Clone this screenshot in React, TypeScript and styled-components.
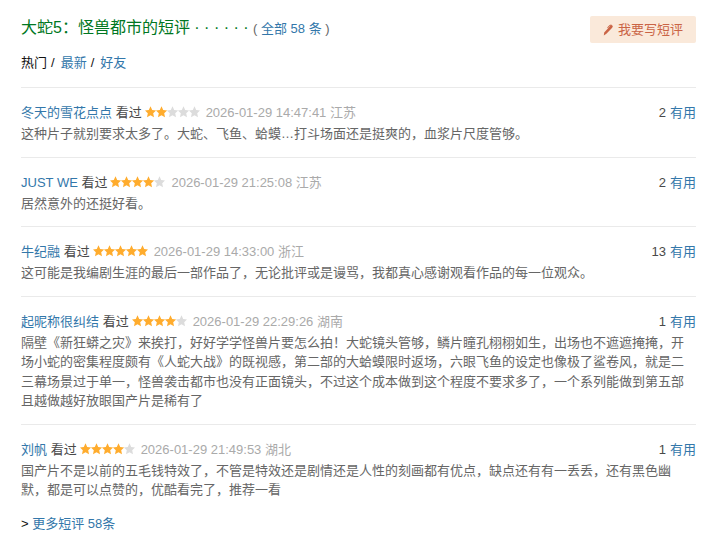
import React from "react";
import styled, { createGlobalStyle } from "styled-components";

const GlobalStyle = createGlobalStyle`
  body {
    margin: 0;
    background: #fff;
    color: #111;
    font: 13px/1.5 "Liberation Sans", Arial, "Noto Sans CJK SC", sans-serif;
  }
`;

const Section = styled.section`
  padding: 15px 30px 0 21px;
`;

const TopBar = styled.header`
  display: flex;
  justify-content: space-between;
  align-items: flex-start;
`;

const Title = styled.h2`
  margin: 0;
  font-size: 16px;
  font-weight: normal;
  line-height: 26px;
  color: #007722;
  white-space: pre;
`;

const Total = styled.span`
  font-size: 13px;
  color: #666;
`;

const Link = styled.a`
  color: #3377aa;
  text-decoration: none;

  &:hover {
    background: #3377aa;
    color: #fff;
  }
`;

const WriteButton = styled.button`
  display: flex;
  align-items: center;
  gap: 4px;
  height: 27px;
  margin: 1px 0 0;
  padding: 0 13px 0 12px;
  border: 0;
  border-radius: 2px;
  background: #fae9da;
  color: #ca6445;
  font: inherit;
  cursor: pointer;
`;

const Tabs = styled.nav`
  display: flex;
  gap: 4px;
  margin: 10px 0 14px;
  line-height: 20px;
`;

const Divider = styled.span`
  margin-right: 2px;
`;

const List = styled.ul`
  margin: 0;
  padding: 0;
  list-style: none;
`;

const Item = styled.li`
  padding: 15px 0 13px;
  border-top: 1px solid #eaeaea;
`;

const ItemHead = styled.div`
  display: flex;
  align-items: center;
  gap: 3px;
  height: 20px;
  margin-bottom: 1px;
  color: #494949;
`;

const Stars = styled.svg`
  display: block;
  width: 55px;
  height: 12px;
  margin-bottom: 2px;
`;

const Meta = styled.span`
  margin-left: 3px;
  color: #aaa;
`;

const Votes = styled.span`
  display: flex;
  gap: 4px;
  margin-left: auto;
`;

const Body = styled.p`
  margin: 0;
  padding-right: 10px;
  color: #666;
`;

const More = styled.footer`
  padding: 1px 0 20px;
`;

const STAR =
  "M5.5 0.2 L7.2 4 L11.1 4.4 L8.2 7.2 L9 11.3 L5.5 9.2 L2 11.3 L2.8 7.2 L-0.1 4.4 L3.8 4 Z";

function Rating({ value }: { value: number }) {
  return (
    <Stars viewBox="0 0 55 12" role="img" aria-label={`${value} / 5`}>
      {[0, 1, 2, 3, 4].map((i) => (
        <path
          key={i}
          d={STAR}
          transform={`translate(${i * 11} 0)`}
          fill={i < value ? "#ffac2d" : "#dcdcdc"}
        />
      ))}
    </Stars>
  );
}

function Pen() {
  return (
    <svg width="12" height="12" viewBox="0 0 12 12" fill="#ca6445" aria-hidden="true">
      <path d="M9 0.8 L10.9 2 L10.2 3.8 L4.4 9.8 L1.8 11.4 L2.2 8.6 L6.8 3.6 Z" />
      <path d="M5.2 3.6 L7.6 1 L9.4 0.6 L9.2 1.4 L8 1.8 L5.8 4.2 Z" />
    </svg>
  );
}

interface Comment {
  name: string;
  stars: number;
  time: string;
  place: string;
  votes: number;
  text: string;
}

const comments: Comment[] = [
  {
    name: "冬天的雪花点点",
    stars: 2,
    time: "2026-01-29 14:47:41",
    place: "江苏",
    votes: 2,
    text: "这种片子就别要求太多了。大蛇、飞鱼、蛤蟆…打斗场面还是挺爽的，血浆片尺度管够。",
  },
  {
    name: "JUST WE",
    stars: 4,
    time: "2026-01-29 21:25:08",
    place: "江苏",
    votes: 2,
    text: "居然意外的还挺好看。",
  },
  {
    name: "牛纪融",
    stars: 5,
    time: "2026-01-29 14:33:00",
    place: "浙江",
    votes: 13,
    text: "这可能是我编剧生涯的最后一部作品了，无论批评或是谩骂，我都真心感谢观看作品的每一位观众。",
  },
  {
    name: "起昵称很纠结",
    stars: 4,
    time: "2026-01-29 22:29:26",
    place: "湖南",
    votes: 1,
    text: "隔壁《新狂蟒之灾》来挨打，好好学学怪兽片要怎么拍！大蛇镜头管够，鳞片瞳孔栩栩如生，出场也不遮遮掩掩，开场小蛇的密集程度颇有《人蛇大战》的既视感，第二部的大蛤蟆限时返场，六眼飞鱼的设定也像极了鲨卷风，就是二三幕场景过于单一，怪兽袭击都市也没有正面镜头，不过这个成本做到这个程度不要求多了，一个系列能做到第五部且越做越好放眼国产片是稀有了",
  },
  {
    name: "刘帆",
    stars: 4,
    time: "2026-01-29 21:49:53",
    place: "湖北",
    votes: 1,
    text: "国产片不是以前的五毛钱特效了，不管是特效还是剧情还是人性的刻画都有优点，缺点还有有一丢丢，还有黑色幽默，都是可以点赞的，优酷看完了，推荐一看",
  },
];

export default function App() {
  return (
    <>
      <GlobalStyle />
      <Section lang="zh-CN">
        <TopBar>
          <Title>
            大蛇5：怪兽都市的短评 · · · · · ·{" "}
            <Total>
              ( <Link href="#all">全部 58 条</Link> )
            </Total>
          </Title>
          <WriteButton type="button">
            <Pen />
            我要写短评
          </WriteButton>
        </TopBar>
        <Tabs>
          <span>热门</span>
          <Divider>/</Divider>
          <Link href="#latest">最新</Link>
          <Divider>/</Divider>
          <Link href="#friends">好友</Link>
        </Tabs>
        <List>
          {comments.map((c) => (
            <Item key={c.name}>
              <ItemHead>
                <span>
                  <Link href="#user">{c.name}</Link> 看过
                </span>
                <Rating value={c.stars} />
                <Meta>
                  <time>{c.time}</time> {c.place}
                </Meta>
                <Votes>
                  <span>{c.votes}</span>
                  <Link href="#useful">有用</Link>
                </Votes>
              </ItemHead>
              <Body>{c.text}</Body>
            </Item>
          ))}
        </List>
        <More>
          &gt; <Link href="#more">更多短评 58条</Link>
        </More>
      </Section>
    </>
  );
}
